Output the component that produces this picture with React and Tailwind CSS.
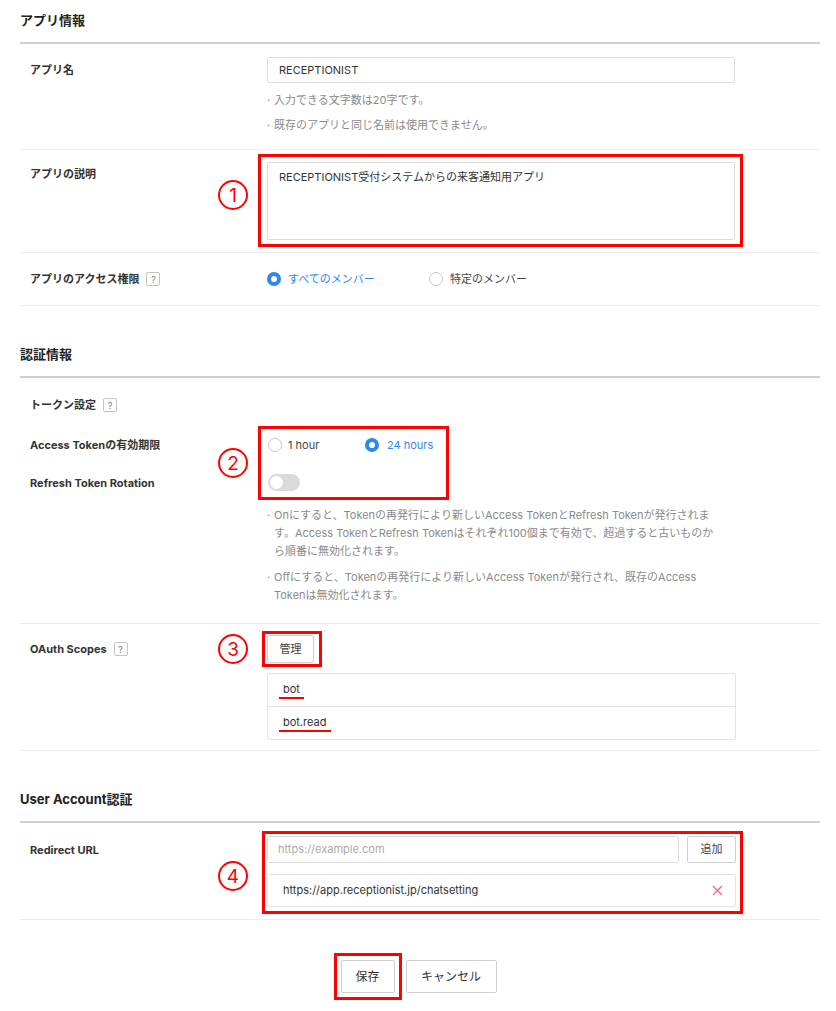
import React from 'react';

const Mark = ({ n, className }) => (
  <div
    className={
      'absolute flex h-[30px] w-[30px] items-center justify-center rounded-full border-2 border-[#f00] text-[19px] leading-none text-[#f00] ' +
      className
    }
  >
    {n}
  </div>
);

const Help = () => (
  <span className="ml-[7px] inline-flex h-[14px] w-[14px] items-center justify-center rounded-[2px] border border-[#c4c4c4] text-[9px] font-normal leading-none text-[#777]">
    ?
  </span>
);

const Radio = ({ checked }) =>
  checked ? (
    <span className="h-[14px] w-[14px] shrink-0 rounded-full border-[4px] border-[#2e86f0] bg-white" />
  ) : (
    <span className="h-[14px] w-[14px] shrink-0 rounded-full border border-[#c8c8c8] bg-white" />
  );

const Note = ({ children, className = '' }) => (
  <div className={'flex text-[11px] leading-[18px] text-[#8a8a8a] ' + className}>
    <span className="w-[7px] shrink-0">·</span>
    <span>{children}</span>
  </div>
);

const SectionTitle = ({ children, className = '' }) => (
  <div
    className={
      'flex h-[44px] items-center border-b-2 border-[#cfcfcf] text-[13px] font-bold text-[#222] ' + className
    }
  >
    {children}
  </div>
);

export default function App() {
  return (
    <div className="min-h-screen w-[836px] bg-white pb-[20px] font-['Inter','Noto_Sans_CJK_JP',sans-serif] text-[#333]">
      <div className="pl-5 pr-4">
        {/* アプリ情報 */}
        <SectionTitle>アプリ情報</SectionTitle>

        <div className="flex border-b border-[#ececec] pb-[15px] pl-[10px] pt-[13px]">
          <div className="w-[237px] shrink-0 text-[11px] font-bold leading-[26px]">アプリ名</div>
          <div className="w-[468px]">
            <div className="flex h-[26px] items-center rounded-[2px] border border-[#dcdcdc] pl-[11px] text-[11px]">
              RECEPTIONIST
            </div>
            <Note className="mt-[8px]">入力できる文字数は20字です。</Note>
            <Note className="mt-[7px]">既存のアプリと同じ名前は使用できません。</Note>
          </div>
        </div>

        <div className="relative flex border-b border-[#ececec] pb-[5px] pl-[10px] pt-[4px]">
          <div className="mt-[11px] w-[237px] shrink-0 text-[11px] font-bold leading-[18px]">アプリの説明</div>
          <div className="-ml-[9px] border-[3px] border-[#f00] pb-[4px] pl-[6px] pr-[5px] pt-[5px]">
            <div className="h-[78px] w-[468px] rounded-[2px] border border-[#dcdcdc] pl-[11px] pt-[6px] text-[11px] leading-[16px]">
              RECEPTIONIST受付システムからの来客通知用アプリ
            </div>
          </div>
          <Mark n="1" className="left-[198px] top-[30px]" />
        </div>

        <div className="flex h-[53px] items-center border-b border-[#ececec] pl-[10px]">
          <div className="flex w-[237px] shrink-0 items-center text-[11px] font-bold leading-[18px]">
            アプリのアクセス権限
            <Help />
          </div>
          <div className="flex items-center text-[11px]">
            <div className="flex w-[162px] items-center gap-[7px] text-[#2e86f0]">
              <Radio checked />
              すべてのメンバー
            </div>
            <div className="flex items-center gap-[7px] text-[#444]">
              <Radio />
              特定のメンバー
            </div>
          </div>
        </div>

        {/* 認証情報 */}
        <SectionTitle className="mt-[28px]">認証情報</SectionTitle>

        <div className="relative border-b border-[#ececec] pb-[19px] pl-[10px] pt-[18px]">
          <div className="flex items-center text-[11px] font-bold leading-[18px]">
            トークン設定
            <Help />
          </div>
          <div className="mt-[12px] flex">
            <div className="w-[237px] shrink-0 text-[11px] font-bold leading-[18px]">
              <div className="mt-[10px]">Access Tokenの有効期限</div>
              <div className="mt-[20px]">Refresh Token Rotation</div>
            </div>
            <div className="flex flex-col">
              <div className="-ml-[9px] w-[191px] border-[3px] border-[#f00] pb-[6px] pl-[7px] pt-[6px]">
                <div className="flex h-[20px] items-center text-[11px]">
                  <div className="flex w-[97px] items-center gap-[6px] text-[#444]">
                    <Radio />1 hour
                  </div>
                  <div className="flex items-center gap-[8px] text-[#2e86f0]">
                    <Radio checked />24 hours
                  </div>
                </div>
                <div className="mt-[19px] flex h-[17px] w-[32px] items-center rounded-full bg-[#d9dadd] pl-[2px]">
                  <span className="h-[13px] w-[13px] rounded-full bg-white" />
                </div>
              </div>
              <Note className="mt-[6px]">
                Onにすると、Tokenの再発行により新しいAccess TokenとRefresh Tokenが発行されま
                <br />
                す。Access TokenとRefresh Tokenはそれぞれ100個まで有効で、超過すると古いものか
                <br />
                ら順番に無効化されます。
              </Note>
              <Note className="mt-[8px]">
                Offにすると、Tokenの再発行により新しいAccess Tokenが発行され、既存のAccess
                <br />
                Tokenは無効化されます。
              </Note>
            </div>
          </div>
          <Mark n="2" className="left-[198px] top-[70px]" />
        </div>

        <div className="relative flex border-b border-[#ececec] pb-[10px] pl-[10px] pt-[7px]">
          <div className="mt-[9px] flex h-[18px] w-[237px] shrink-0 items-center text-[11px] font-bold">
            OAuth Scopes
            <Help />
          </div>
          <div className="flex flex-col">
            <div className="-ml-[5px] self-start border-[3px] border-[#f00] pb-[1px] pl-[2px] pr-[5px] pt-[1px]">
              <button className="flex h-[28px] w-[47px] items-center justify-center rounded-[2px] border border-[#cfcfcf] bg-white text-[11px] text-[#444]">
                管理
              </button>
            </div>
            <div className="mt-[6px] w-[469px] rounded-[2px] border border-[#e3e3e3] text-[11px]">
              <div className="flex h-[33px] items-center border-b border-[#e3e3e3] pl-[11px]">
                <span className="border-b-2 border-[#f00] px-[4px] leading-[15px]">bot</span>
              </div>
              <div className="flex h-[32px] items-center pl-[11px]">
                <span className="border-b-2 border-[#f00] px-[4px] leading-[15px]">bot.read</span>
              </div>
            </div>
          </div>
          <Mark n="3" className="left-[198px] top-[10px]" />
        </div>

        {/* User Account認証 */}
        <SectionTitle className="mt-[28px]">User Account認証</SectionTitle>

        <div className="relative flex border-b border-[#ececec] pb-[5px] pl-[10px] pt-[8px]">
          <div className="mt-[10px] w-[237px] shrink-0 text-[11px] font-bold leading-[18px]">Redirect URL</div>
          <div className="-ml-[5px] border-[3px] border-[#f00] pb-[4px] pl-[2px] pr-[4px] pt-[2px]">
            <div className="flex w-[469px] gap-[8px]">
              <div className="flex h-[27px] flex-1 items-center rounded-[2px] border border-[#dcdcdc] pl-[10px] text-[11px] text-[#aaa]">
                https://example.com
              </div>
              <button className="flex h-[27px] w-[49px] items-center justify-center rounded-[2px] border border-[#cfcfcf] bg-white text-[11px] text-[#444]">
                追加
              </button>
            </div>
            <div className="mt-[11px] flex h-[33px] w-[469px] items-center justify-between rounded-[2px] border border-[#e3e3e3] pl-[15px] pr-[12px] text-[11px]">
              https://app.receptionist.jp/chatsetting
              <svg width="11" height="11" viewBox="0 0 11 11" fill="none" stroke="#f26b6b" strokeWidth="1.3">
                <path d="M1 1L10 10M10 1L1 10" />
              </svg>
            </div>
          </div>
          <Mark n="4" className="left-[198px] top-[38px]" />
        </div>
      </div>

      <div className="mt-[33px] flex justify-center gap-[4px] pr-[6px]">
        <div className="border-[3px] border-[#f00] p-[4px]">
          <button className="flex h-[33px] w-[54px] items-center justify-center rounded-[2px] border border-[#cfcfcf] bg-white text-[12px] text-[#333]">
            保存
          </button>
        </div>
        <button className="mt-[7px] flex h-[33px] w-[91px] items-center justify-center rounded-[2px] border border-[#cfcfcf] bg-white text-[12px] text-[#333]">
          キャンセル
        </button>
      </div>
    </div>
  );
}
